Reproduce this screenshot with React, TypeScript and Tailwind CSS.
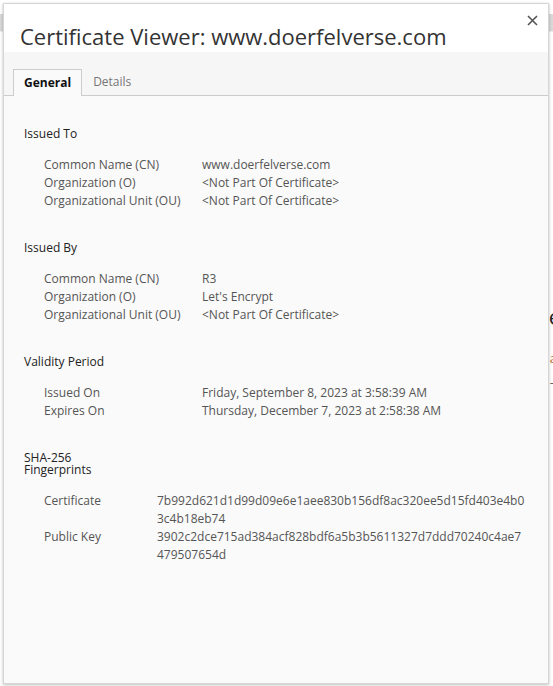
import React from "react"

type Row = { label: string; value: React.ReactNode }

const sections: { title: React.ReactNode; rows: Row[]; col: string; top: string; multi?: boolean }[] = [
  {
    title: "Issued To",
    col: "w-[158px]",
    top: "mt-[29px]",
    rows: [
      { label: "Common Name (CN)", value: "www.doerfelverse.com" },
      { label: "Organization (O)", value: "<Not Part Of Certificate>" },
      { label: "Organizational Unit (OU)", value: "<Not Part Of Certificate>" },
    ],
  },
  {
    title: "Issued By",
    col: "w-[158px]",
    top: "mt-[29px]",
    rows: [
      { label: "Common Name (CN)", value: "R3" },
      { label: "Organization (O)", value: "Let's Encrypt" },
      { label: "Organizational Unit (OU)", value: "<Not Part Of Certificate>" },
    ],
  },
  {
    title: "Validity Period",
    col: "w-[158px]",
    top: "mt-[29px]",
    rows: [
      { label: "Issued On", value: "Friday, September 8, 2023 at 3:58:39 AM" },
      { label: "Expires On", value: "Thursday, December 7, 2023 at 2:58:38 AM" },
    ],
  },
  {
    title: (
      <>
        SHA-256
        <br />
        Fingerprints
      </>
    ),
    col: "w-[113px]",
    top: "mt-[32px]",
    multi: true,
    rows: [
      {
        label: "Certificate",
        value: (
          <>
            <span className="block">7b992d621d1d99d09e6e1aee830b156df8ac320ee5d15fd403e4b0</span>
            <span className="block">3c4b18eb74</span>
          </>
        ),
      },
      {
        label: "Public Key",
        value: (
          <>
            <span className="block">3902c2dce715ad384acf828bdf6a5b3b5611327d7ddd70240c4ae7</span>
            <span className="block">479507654d</span>
          </>
        ),
      },
    ],
  },
]

export default function App() {
  return (
    <div className="relative h-[686px] w-[553px] overflow-hidden bg-white font-['Open_Sans',sans-serif]">
      {/* page behind the dialog */}
      <div className="flex flex-col">
        <div className="mt-[14px] h-[17px] bg-[#d9d9d9]" />
        <div className="h-px bg-[#ececec]" />
        <div className="mt-[270px] flex flex-col items-end">
          <div className="-mr-[8px] text-[22px] leading-[28px] text-[#222]">e</div>
          <div className="-mr-[4px] mt-[20px] text-[13px] leading-[16px] text-[#c26a2a]">a</div>
          <div className="-mr-[1px] mt-[8px] text-[13px] leading-[16px] text-[#666]">-</div>
        </div>
      </div>

      {/* dialog */}
      <div className="absolute left-[3px] top-[3px] flex h-[681px] w-[546px] flex-col border border-[#d6d6d6] bg-[#fafafa] shadow-[0_1px_3px_rgba(0,0,0,0.25)]">
        <div className="relative bg-white">
          <h1 className="pl-[16px] pt-[16px] text-[22px] leading-[32px] text-[#333]">
            Certificate Viewer: www.doerfelverse.com
          </h1>
          <button type="button" className="absolute right-[9px] top-[10px] p-[1px] text-[#555]">
            <svg width="11" height="11" viewBox="0 0 11 11">
              <path d="M1 1L10 10M10 1L1 10" stroke="currentColor" strokeWidth="1.6" />
            </svg>
          </button>
        </div>
        <div className="flex border-b border-[#cccccc] bg-[#f6f6f6] pl-[9px] pt-[17px]">
          <div className="-mb-px h-[27px] border border-b-0 border-[#cccccc] bg-[#fafafa] px-[10px] text-[12px] font-bold leading-[26px] text-[#111]">
            General
          </div>
          <div className="h-[26px] px-[11px] text-[12px] leading-[26px] text-[#777]">Details</div>
        </div>

        <div className="flex-1 px-[20px] text-[12px]">
          {sections.map((s, i) => (
            <section key={i} className={s.top}>
              <div className={s.multi ? "leading-[12px] text-[#222]" : "leading-[18px] text-[#222]"}>{s.title}</div>
              <div className={s.multi ? "mt-[16px]" : "mt-[13px]"}>
                {s.rows.map((r, j) => (
                  <div key={j} className="flex pl-[20px] leading-[18px] text-[#555]">
                    <div className={`${s.col} shrink-0`}>{r.label}</div>
                    <div className="whitespace-nowrap">{r.value}</div>
                  </div>
                ))}
              </div>
            </section>
          ))}
        </div>
      </div>
    </div>
  )
}
